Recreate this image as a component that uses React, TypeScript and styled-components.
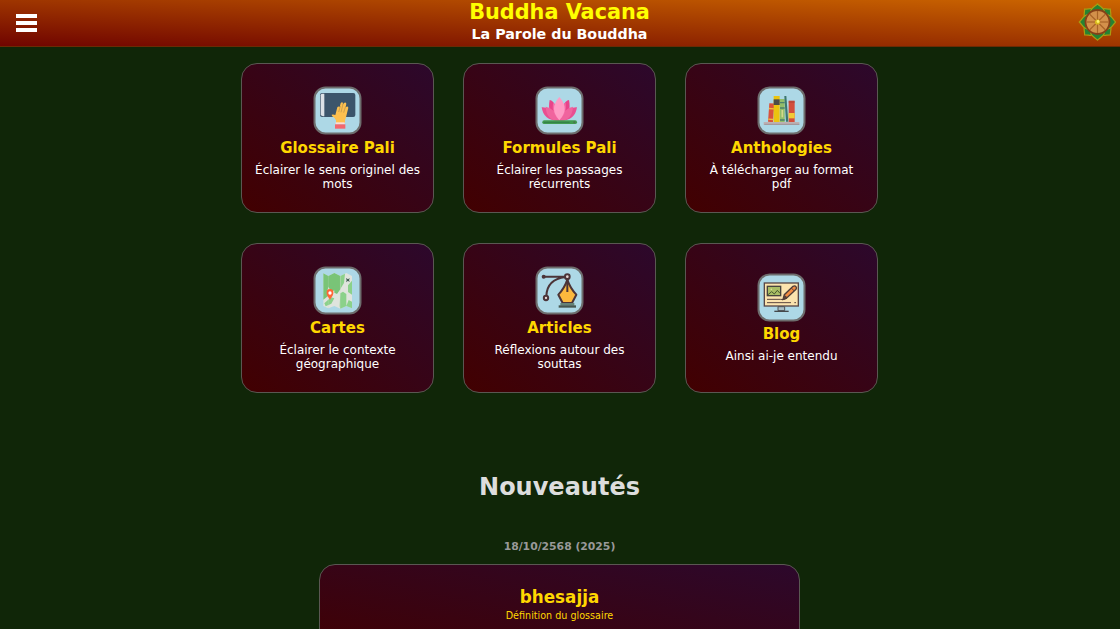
import React from "react";
import styled, { createGlobalStyle } from "styled-components";

const GlobalStyle = createGlobalStyle`
  html, body { margin: 0; height: 629px; overflow: hidden; background: #102608; }
  body { font-family: "DejaVu Sans", Verdana, sans-serif; color: #fff; }
  * { box-sizing: border-box; }
`;

const Header = styled.header`
  display: grid;
  grid-template-columns: 60px 1fr 60px;
  height: 47px;
  background: linear-gradient(to top right, #700400, #cc6600);
  border-bottom: 1px solid #6b2a04;
`;

const MenuButton = styled.button`
  display: flex;
  flex-direction: column;
  gap: 3px;
  align-self: start;
  margin: 14px 0 0 16px;
  padding: 0;
  border: 0;
  background: none;
`;

const MenuBar = styled.span`
  width: 21px;
  height: 4px;
  background: #fff;
`;

const Brand = styled.div`
  text-align: center;
  font-weight: bold;
  padding-right: 1px;
`;

const SiteTitle = styled.h1`
  margin: 0;
  font-size: 20.8px;
  line-height: 25px;
  color: #ffff00;
`;

const SiteSubtitle = styled.p`
  margin: 0;
  font-size: 14.25px;
  line-height: 18px;
`;

const Emblem = styled.svg`
  width: 38px;
  height: 38px;
  margin: 3px 0 0 18px;
`;

const Main = styled.main`
  width: 1119px;
  display: flex;
  flex-direction: column;
  align-items: center;
`;

const CardGrid = styled.section`
  display: grid;
  grid-template-columns: repeat(3, 193px);
  grid-auto-rows: 150px;
  gap: 30px 29px;
  margin-top: 16px;
`;

const Panel = styled.article`
  border: 1px solid #5a5752;
  border-radius: 16px;
  background: linear-gradient(to top right, #420000, #2c082c) border-box;
  text-align: center;
`;

const Card = styled(Panel)`
  display: flex;
  flex-direction: column;
  align-items: center;
  justify-content: center;
  padding: 0 12.5px;
`;

const Picture = styled.svg`
  display: block;
  flex: none;
  width: 49px;
  height: 49px;
`;

const CardTitle = styled.h2<{ $single?: boolean }>`
  margin: ${(p) => (p.$single ? 3 : 4)}px 0 0;
  font-size: 15px;
  line-height: 18px;
  color: #ffd700;
`;

const CardText = styled.p<{ $single?: boolean }>`
  margin: 6px 0 ${(p) => (p.$single ? 1 : -1)}px;
  font-size: 12px;
  line-height: 14px;
`;

const SectionTitle = styled.h2`
  margin: 80px 0 0;
  font-size: 24px;
  line-height: 28px;
  color: #ddd;
`;

const DateLabel = styled.h3`
  margin: 39px 0 0;
  font-size: 10.8px;
  line-height: 14px;
  color: #999;
`;

const NewsPanel = styled(Panel)`
  width: 481px;
  height: 100px;
  margin-top: 10px;
  padding-top: 22px;
  color: #ffd700;
`;

const NewsTitle = styled.h4`
  margin: 0;
  font-size: 16.8px;
  line-height: 20px;
`;

const NewsKind = styled.p`
  margin: 3px 0 0;
  font-size: 9.6px;
  line-height: 12px;
`;

const Art = ({ children }: { children: React.ReactNode }) => (
  <Picture viewBox="21 18 147 147">
    <rect x="25.5" y="22.5" width="138" height="138" rx="33" fill="#add8e6" stroke="#6d6d6d" strokeWidth="6" />
    {children}
  </Picture>
);

const GlossaryArt = () => (
  <Art>
    <rect x="42" y="39" width="106" height="72" rx="6" fill="#3c556b" />
    <path d="M48 41h7v68h-4q-7-1-7-6V46q0-4 4-5z" fill="#dce1e6" />
    <path d="M90 129V121Q88 114 78 108L77 104Q82 102 88 105L94 82Q97 77 101 81L104 70Q108 64 111 69L110 74L114 69Q119 65 121 71L119 82Q125 77 127 83L120 112Q118 118 117 122V129z" fill="#fdc04f" />
    <path d="M98 96l5-18M105 97l6-25M113 98l6-19" stroke="#b5904d" strokeWidth="2" />
    <rect x="89" y="127" width="27" height="6" fill="#f8ddd8" />
    <rect x="87" y="133" width="31" height="13" fill="#f3676e" />
  </Art>
);

const LotusArt = () => (
  <Art>
    <path d="M94 122C64 114 60 85 65 60Q86 64 94 122Q102 64 123 60C128 85 124 114 94 122z" fill="#e8438a" />
    <path d="M94 122Q47 124 41 82Q72 80 94 122Q116 80 147 82Q141 124 94 122z" fill="#e94f91" />
    <path d="M94 122Q56 124 53 80Q78 82 94 122Q110 82 135 80Q132 124 94 122z" fill="#f0649e" />
    <path d="M94 121Q70 100 75 68Q94 80 94 121Q94 80 113 68Q118 100 94 121z" fill="#f46ba5" />
    <path d="M94 121Q62 86 94 51Q126 86 94 121z" fill="#ff9bc5" />
    <rect x="43" y="121" width="104" height="11" rx="5.5" fill="#419b50" />
    <path d="M47 127h78" stroke="#317f47" strokeWidth="3" />
    <circle cx="139" cy="127" r="3" fill="#4f7050" />
  </Art>
);

const BooksArt = () => (
  <Art>
    <g transform="rotate(4 64 98)">
      <rect x="56" y="70" width="15" height="56" fill="#d8523c" />
      <path d="M56 86h15M56 118h15" stroke="#efbd3c" strokeWidth="4" />
    </g>
    <rect x="71" y="48" width="18" height="78" fill="#ebc40f" />
    <rect x="71" y="58" width="18" height="17" fill="#4d4d48" />
    <rect x="90" y="57" width="14" height="69" fill="#93bd69" />
    <path d="M90 68h14M90 84h14M90 120h14" stroke="#4b806b" strokeWidth="4" />
    <path d="M97 90v22" stroke="#d5d98a" strokeWidth="5" />
    <path d="M103 48l6 0 6 77h-7z" fill="#3c776e" />
    <rect x="116" y="62" width="18" height="64" fill="#d34e3b" />
    <rect x="116" y="99" width="18" height="16" fill="#f2ca36" />
    <path d="M116 66h18" stroke="#a94039" strokeWidth="3" />
    <rect x="41" y="126" width="107" height="9" fill="#bcb1b3" />
    <path d="M43 133h105" stroke="#9f9599" strokeWidth="3" />
  </Art>
);

const MapArt = () => (
  <Art>
    <path d="M52 40l15 8 18-9 18 9 18-9 17 9v97l-17-7-18 8-18-8-18 7-15-7z" fill="#dfe4dd" />
    <path d="M52 40l15 8v34l-4 14 4 11-15 12zM67 48l18-9v52l-9 5-9-16zM85 39l18 9v40l-10 14-8-4z" fill="#79c477" />
    <path d="M103 48l14-7-3 28-11 18zM126 76l12-14v42l-12-8zM103 100l8-5 10 7v36l-18 8-2-7zM55 130l20-18 10 3-9 16-17 8zM128 120l10 5v20l-17-7z" fill="#8bd18a" />
    <path d="M67 48v97M103 48v98" stroke="#c4d4c4" strokeOpacity=".4" strokeWidth="2" />
    <path d="M120 54l6 4 5-4-2 7 3 4-7-2-5 4 2-6z" fill="#3e5a50" />
    <path d="M72 119Q60 105 62 97a10 10 0 0 1 20 0Q83 105 72 119z" fill="#ff6636" />
    <circle cx="72" cy="99" r="5" fill="#fff" />
  </Art>
);

const PenArt = () => (
  <Art>
    <g fill="none" stroke="#4b3438" strokeWidth="6">
      <path d="M48 50h69M55 108Q57 58 112 51" />
      <circle cx="54" cy="114" r="6.5" fill="#e7d7d4" />
      <path d="M118 59Q126 84 145 104L132 129H104L91 104Q110 84 118 59z" fill="#fcb83d" strokeLinejoin="round" />
      <path d="M118 60v36" />
      <circle cx="118" cy="50" r="7" fill="#e7d7d4" />
    </g>
    <circle cx="47" cy="50" r="6" fill="#4b3438" />
    <path d="M97 129h42v8H97z" fill="#648277" />
    <path d="M92 136h52v7H92z" fill="#45564f" />
  </Art>
);

const BlogArt = () => (
  <Art>
    <rect x="43" y="48" width="102" height="69" fill="#fbe3ae" stroke="#574747" strokeWidth="4" />
    <path d="M84 119h20v12H84z" fill="#a8bdc3" stroke="#4c5052" strokeWidth="3" />
    <path d="M73 133h43" stroke="#44484a" strokeWidth="4" />
    <rect x="52" y="58" width="40" height="28" fill="#a9bd65" stroke="#46423e" strokeWidth="4" />
    <path d="M54 83l11-9 8 7 9-11 8 9" fill="none" stroke="#47572f" strokeWidth="3" />
    <circle cx="64" cy="67" r="2.5" fill="#dbe396" />
    <path d="M51 97h40q12 3 20-3M51 107h72M133 107h5" fill="none" stroke="#594540" strokeWidth="3" />
    <path d="M99 97l4-14 26-25q6-3 9 1 3 4 0 8l-27 25z" fill="#f28b43" stroke="#4e3c38" strokeWidth="4" />
    <path d="M99 97l4-14 9 8z" fill="#594039" />
    <path d="M124 63l9 9" stroke="#57433e" strokeWidth="3" />
  </Art>
);

const petals = [45, 135, 225, 315, 0, 90, 180, 270];
const spokes = [0, 45, 90, 135];

const LotusWheel = () => (
  <Emblem viewBox="-19.5 -19 38 38">
    {petals.map((a) => (
      <path key={a} transform={`rotate(${a})`} d="M-7-9C-7.5-14-3-15 0-18.2C3-15 7.5-14 7-9L0-5z" fill="#258333" stroke="#a89c13" strokeWidth="1.2" />
    ))}
    <circle r="12" fill="#d3914b" stroke="#854017" strokeWidth="1.8" />
    {spokes.map((a) => (
      <path key={a} transform={`rotate(${a})`} d="M0-11V11" stroke="#a86427" strokeWidth="1.2" />
    ))}
    <circle r="2.6" fill="#d8b91c" />
    <circle cx=".5" cy="-.5" r="1.4" fill="#fff36c" />
  </Emblem>
);

const sections = [
  { title: "Glossaire Pali", text: "Éclairer le sens originel des mots", Drawing: GlossaryArt },
  { title: "Formules Pali", text: "Éclairer les passages récurrents", Drawing: LotusArt },
  { title: "Anthologies", text: "À télécharger au format pdf", Drawing: BooksArt },
  { title: "Cartes", text: "Éclairer le contexte géographique", Drawing: MapArt },
  { title: "Articles", text: "Réflexions autour des souttas", Drawing: PenArt },
  { title: "Blog", text: "Ainsi ai-je entendu", Drawing: BlogArt, single: true },
];

export default function App() {
  return (
    <>
      <GlobalStyle />
      <Header>
        <MenuButton aria-label="Menu">
          <MenuBar />
          <MenuBar />
          <MenuBar />
        </MenuButton>
        <Brand>
          <SiteTitle>Buddha Vacana</SiteTitle>
          <SiteSubtitle>La Parole du Bouddha</SiteSubtitle>
        </Brand>
        <LotusWheel />
      </Header>
      <Main>
        <CardGrid>
          {sections.map(({ title, text, Drawing, single }) => (
            <Card key={title}>
              <Drawing />
              <CardTitle $single={single}>{title}</CardTitle>
              <CardText $single={single}>{text}</CardText>
            </Card>
          ))}
        </CardGrid>
        <SectionTitle>Nouveautés</SectionTitle>
        <DateLabel>18/10/2568 (2025)</DateLabel>
        <NewsPanel>
          <NewsTitle>bhesajja</NewsTitle>
          <NewsKind>Définition du glossaire</NewsKind>
        </NewsPanel>
      </Main>
    </>
  );
}
